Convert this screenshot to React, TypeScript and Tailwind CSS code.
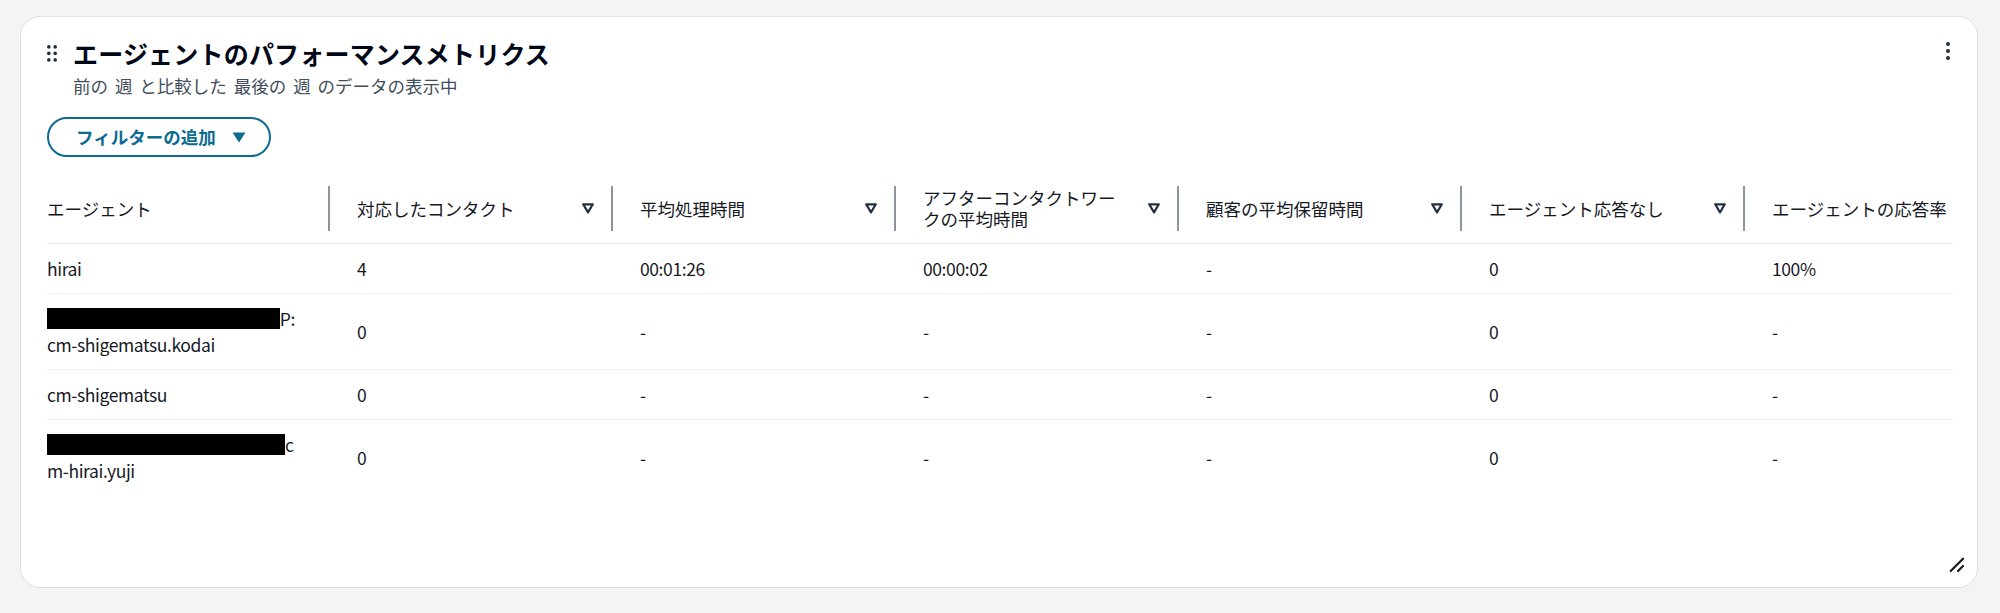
import React from "react";

const FONT = { fontFamily: '"Noto Sans CJK JP", "Noto Sans", sans-serif' };

const columns = [
    { label: "エージェント", sortable: false },
    { label: "対応したコンタクト", sortable: true },
    { label: "平均処理時間", sortable: true },
    { label: "アフターコンタクトワー\nクの平均時間", sortable: true },
    { label: "顧客の平均保留時間", sortable: true },
    { label: "エージェント応答なし", sortable: true },
    { label: "エージェントの応答率", sortable: true },
];

const Redacted = ({ tail }: { tail: string }) => (
    <div className="flex items-center">
        <span className="inline-block h-[21px] w-[238px] bg-black" />
        <span>{tail}</span>
    </div>
);

const rows: { agent: React.ReactNode; values: string[] }[] = [
    { agent: "hirai", values: ["4", "00:01:26", "00:00:02", "-", "0", "100%"] },
    {
        agent: (
            <>
                <Redacted tail="P:" />
                <div>cm-shigematsu.kodai</div>
            </>
        ),
        values: ["0", "-", "-", "-", "0", "-"],
    },
    { agent: "cm-shigematsu", values: ["0", "-", "-", "-", "0", "-"] },
    {
        agent: (
            <>
                <Redacted tail="c" />
                <div>m-hirai.yuji</div>
            </>
        ),
        values: ["0", "-", "-", "-", "0", "-"],
    },
];

const SortIcon = () => (
    <svg width="12" height="11" viewBox="0 0 12 11" className="shrink-0">
        <path d="M1.2 1.3 H10.8 L6 9.4 Z" fill="none" stroke="#232f3e" strokeWidth="2.2" strokeLinejoin="round" />
    </svg>
);

const HeaderCell = ({ label, sortable, first }: { label: string; sortable: boolean; first: boolean }) => (
    <div className="flex h-full w-[283px] shrink-0 items-center">
        <div className={`flex-1 whitespace-pre leading-[21px] ${first ? "" : "pl-[27px]"}`}>{label}</div>
        {sortable && <SortIcon />}
        <div className="ml-[17px] h-[45px] w-[2px] shrink-0 bg-[#8d969f]" />
    </div>
);

const App = () => {
    return (
        <div className="h-[613px] w-[2000px] bg-[#f4f4f4] pl-[20px] pr-[22px] pt-[16px]" style={FONT}>
            <div className="relative h-[572px] w-[1958px] overflow-hidden rounded-[20px] border border-[#e0e0e0] bg-white pl-[26px] pr-[24px] pt-[20px] text-[17.5px] text-[#16191f]">
                <div className="flex items-center">
                    <svg width="10" height="17" viewBox="0 0 10 17" className="mr-[16px] shrink-0">
                        {[1.8, 8.2].map((cx) =>
                            [1.9, 8.4, 14.9].map((cy) => <circle key={`${cx}-${cy}`} cx={cx} cy={cy} r="1.8" fill="#232f3e" />)
                        )}
                    </svg>
                    <h1 className="text-[25px] font-bold leading-[32px] tracking-[0.2px] text-[#000716]">エージェントのパフォーマンスメトリクス</h1>
                </div>
                <div className="mt-[5px] pl-[26px] text-[17.5px] leading-[24px] text-[#414d5c] [word-spacing:3px]">前の 週 と比較した 最後の 週 のデータの表示中</div>

                <button className="mt-[19px] flex h-[40px] items-center rounded-full border-2 border-[#0b6b90] pl-[27px] pr-[23px] text-[17.5px] font-bold text-[#0b6b90]">
                    フィルターの追加
                    <svg width="14" height="11" viewBox="0 0 14 11" className="ml-[16px]">
                        <path d="M0.5 0.5 H13.5 L7 10.5 Z" fill="#0b6b90" />
                    </svg>
                </button>

                <div className="mt-[16px] w-[1906px] overflow-hidden">
                    <div className="w-[1981px]">
                        <div className="flex h-[71px] items-center border-b border-[#e6e8ea]">
                            {columns.map((c, i) => (
                                <HeaderCell key={c.label} label={c.label} sortable={c.sortable} first={i === 0} />
                            ))}
                        </div>
                        {rows.map((r, ri) => (
                            <div
                                key={ri}
                                className={`flex items-center py-[11.5px] leading-[26px] tracking-[-0.4px] ${ri < rows.length - 1 ? "border-b border-[#eef0f1]" : ""}`}
                            >
                                <div className="w-[283px] shrink-0 pr-[35px]">{r.agent}</div>
                                {r.values.map((v, vi) => (
                                    <div key={vi} className="w-[283px] shrink-0 pl-[27px]">
                                        {v}
                                    </div>
                                ))}
                            </div>
                        ))}
                    </div>
                </div>

                <div className="absolute right-[27px] top-[25px] flex flex-col gap-[3px]">
                    <span className="h-[4px] w-[4px] rounded-full bg-[#232f3e]" />
                    <span className="h-[4px] w-[4px] rounded-full bg-[#232f3e]" />
                    <span className="h-[4px] w-[4px] rounded-full bg-[#232f3e]" />
                </div>

                <svg width="16" height="16" viewBox="0 0 16 16" className="absolute bottom-[14px] right-[12px]">
                    <path d="M1.7 14 L14 1.7 M9 14 L14 9" stroke="#16191f" strokeWidth="2.2" strokeLinecap="round" fill="none" />
                </svg>
            </div>
        </div>
    );
};

export default App;
